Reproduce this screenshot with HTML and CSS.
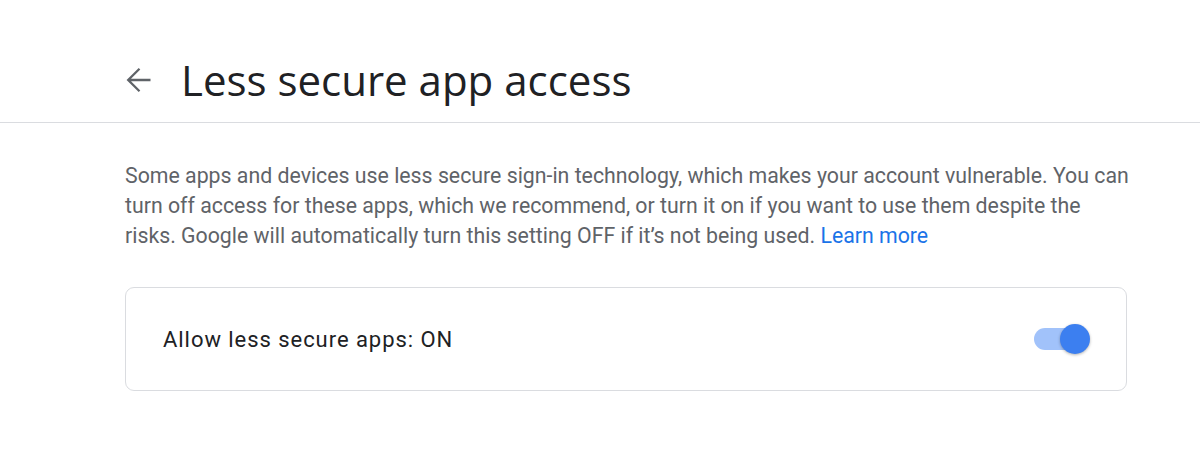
FILE: index.html
```html
<!DOCTYPE html>
<html>
<head>
<meta charset="utf-8">
<link rel="stylesheet" href="styles.css">
</head>
<body>
<header class="topbar">
  <div class="topbar-inner">
    <span class="back">
      <svg width="25" height="26" viewBox="0 0 25 26"><path d="M24.5 13H2M13.5 1.8L2.2 13L13.5 24.2" fill="none" stroke="#5f6368" stroke-width="2.3"/></svg>
    </span>
    <h1 class="title">Less secure app access</h1>
  </div>
</header>
<main class="content">
  <p class="desc">Some apps and devices use less secure sign-in technology, which makes your account vulnerable. You can turn off access for these apps, which we recommend, or turn it on if you want to use them despite the risks. Google will automatically turn this setting OFF if it’s not being used. <a class="link" href="#">Learn more</a></p>
  <div class="card">
    <span class="card-label">Allow less secure apps: ON</span>
    <span class="toggle"><span class="track"></span><span class="knob"></span></span>
  </div>
</main>
</body>
</html>
```
FILE: styles.css
```css
html, body { margin: 0; padding: 0; background: #fff; }
body { font-family: Roboto, "Noto Sans", sans-serif; }
.topbar { height: 123px; border-bottom: 1px solid #dadce0; box-sizing: border-box; }
.topbar-inner { display: flex; align-items: center; padding-left: 126px; height: 100%; padding-top: 37px; box-sizing: border-box; }
.back { display: flex; width: 25px; height: 26px; margin-right: 30px; }
.title { margin: 0; font-family: "Open Sans", Roboto, sans-serif; font-weight: 400; font-size: 42px; color: #202124; line-height: 1; }
.content { padding: 38px 0 0 125px; }
.desc { margin: 0; font-size: 21.3px; line-height: 30px; color: #5f6368; width: 1005px; }
.link { color: #1a73e8; text-decoration: none; }
.card { margin-top: 36px; width: 1002px; height: 104px; box-sizing: border-box; border: 1px solid #dadce0; border-radius: 9px; display: flex; align-items: center; justify-content: space-between; padding: 0 36px 0 37px; }
.card-label { font-size: 22px; letter-spacing: 0.95px; color: #202124; }
.toggle { position: relative; width: 56px; height: 30px; display: block; }
.track { position: absolute; left: 0; top: 4px; width: 50px; height: 22px; border-radius: 11px; background: #a1c2fa; }
.knob { position: absolute; right: 0; top: 0; width: 30px; height: 30px; border-radius: 50%; background: #3c7ff0; box-shadow: 0 1px 3px rgba(0,0,0,0.3); }
```
